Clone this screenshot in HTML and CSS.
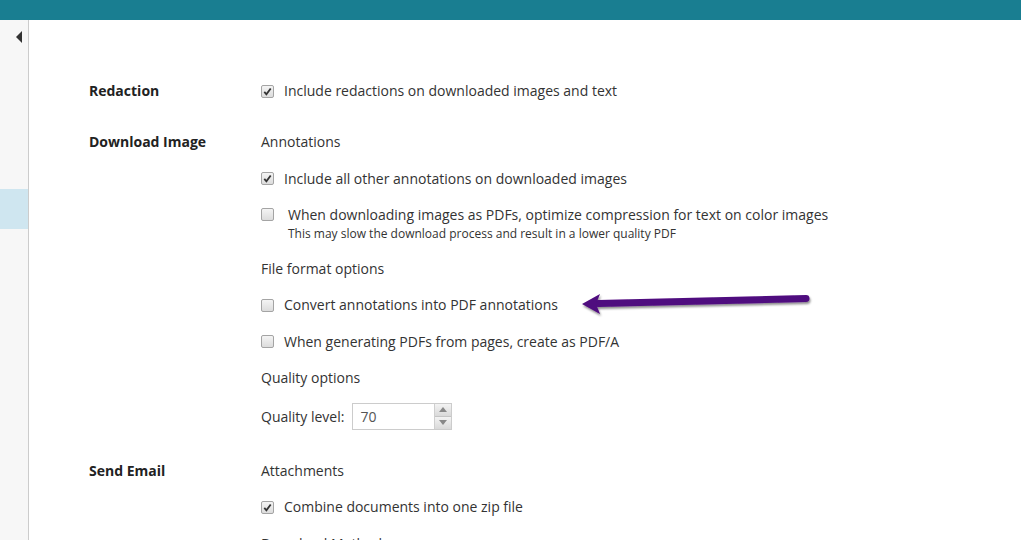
FILE: index.html
```html
<!DOCTYPE html>
<html lang="en">
<head>
  <meta charset="UTF-8">
  <title>Settings</title>
  <link rel="stylesheet" href="styles.css">
</head>
<body>
  <div class="topbar"></div>

  <div class="page">
    <div class="sidebar">
      <span class="collapse"></span>
      <div class="side-active"></div>
    </div>

    <div class="main">
      <div class="section">
        <div class="label">Redaction</div>
        <div class="options">
          <div class="opt"><span class="box checked"><svg viewBox="0 0 12 12" width="11" height="11"><path d="M2.5 6.5 L4.8 9 L9.5 2.8" fill="none" stroke="#333" stroke-width="2"/></svg></span>Include redactions on downloaded images and text</div>
        </div>
      </div>

      <div class="section">
        <div class="label">Download Image</div>
        <div class="options">
          <div class="head">Annotations</div>
          <div class="opt"><span class="box checked"><svg viewBox="0 0 12 12" width="11" height="11"><path d="M2.5 6.5 L4.8 9 L9.5 2.8" fill="none" stroke="#333" stroke-width="2"/></svg></span>Include all other annotations on downloaded images</div>
          <div class="opt opt-top">
            <span class="box"></span>
            <div class="opt-text">
              When downloading images as PDFs, optimize compression for text on color images
              <div class="hint">This may slow the download process and result in a lower quality PDF</div>
            </div>
          </div>
          <div class="head">File format options</div>
          <div class="opt"><span class="box"></span>Convert annotations into PDF annotations</div>
          <div class="opt"><span class="box"></span>When generating PDFs from pages, create as PDF/A</div>
          <div class="head">Quality options</div>
          <div class="quality">
            Quality level:
            <div class="number">
              <span class="number-value">70</span>
              <span class="spin">
                <span class="spin-btn"><svg viewBox="0 0 8 5" width="8" height="5"><path d="M0 5 L4 0 L8 5 Z" fill="#888"/></svg></span>
                <span class="spin-btn"><svg viewBox="0 0 8 5" width="8" height="5"><path d="M0 0 L4 5 L8 0 Z" fill="#888"/></svg></span>
              </span>
            </div>
          </div>
        </div>
      </div>

      <div class="section">
        <div class="label">Send Email</div>
        <div class="options">
          <div class="head">Attachments</div>
          <div class="opt"><span class="box checked"><svg viewBox="0 0 12 12" width="11" height="11"><path d="M2.5 6.5 L4.8 9 L9.5 2.8" fill="none" stroke="#333" stroke-width="2"/></svg></span>Combine documents into one zip file</div>
          <div class="head">Download Method</div>
        </div>
      </div>

      <!-- arrow drawn over the page -->
      <svg class="arrow" width="250" height="32" viewBox="0 0 250 32">
        <defs>
          <filter id="shadow" x="-10%" y="-50%" width="120%" height="200%">
            <feDropShadow dx="1" dy="2" stdDeviation="1.2" flood-color="#000" flood-opacity="0.45"/>
          </filter>
        </defs>
        <g filter="url(#shadow)">
          <path d="M20 13.5 L228 8.5" stroke="#4f0a7f" stroke-width="7" stroke-linecap="round" fill="none"/>
          <path d="M4 14 L22 4 L18 14 L22 24 Z" fill="#4f0a7f"/>
        </g>
      </svg>
    </div>
  </div>
</body>
</html>
```

FILE: styles.css
```css
body {
  margin: 0;
  font-family: "Open Sans", sans-serif;
  font-size: 14px;
  color: #333;
  background-color: #fff;
  overflow: hidden;
}

.topbar {
  height: 20px;
  background-color: #197e91;
}

.page {
  display: flex;
  height: 520px;
}

.sidebar {
  width: 28px;
  background-color: #f7f7f7;
  border-right: 1px solid #cccccc;
  flex-shrink: 0;
}

.collapse {
  display: block;
  width: 0;
  height: 0;
  margin: 11px 0 0 16px;
  border-top: 6px solid transparent;
  border-bottom: 6px solid transparent;
  border-right: 6px solid #333;
}

.side-active {
  margin-top: 146px;
  height: 40px;
  background-color: #cfe6f0;
}

.main {
  position: relative;
  flex: 1;
  padding: 61px 0 0 60px;
}

.section {
  display: flex;
  margin-bottom: 31px;
}

.label {
  width: 172px;
  font-weight: bold;
  color: #222;
  line-height: 20px;
  flex-shrink: 0;
}

.options {
  display: flex;
  flex-direction: column;
  gap: 16.5px;
}

.head {
  line-height: 20px;
}

.opt {
  display: flex;
  align-items: center;
  line-height: 20px;
}

.opt-top {
  align-items: flex-start;
}

.opt-top .box {
  margin-top: 3px;
  margin-right: 14px;
}

.hint {
  font-size: 12px;
  line-height: 17px;
}

.box {
  display: inline-flex;
  align-items: center;
  justify-content: center;
  width: 11px;
  height: 11px;
  margin-right: 10px;
  border: 1px solid #a4a4a4;
  border-radius: 2px;
  background: linear-gradient(#f4f4f4, #dcdcdc);
  flex-shrink: 0;
}

.quality {
  display: flex;
  align-items: center;
  gap: 8px;
  margin-top: -2px;
}

.number {
  display: flex;
  width: 100px;
  height: 27px;
  border: 1px solid #cccccc;
  box-sizing: border-box;
}

.number-value {
  flex: 1;
  padding-left: 7px;
  line-height: 25px;
  color: #555;
}

.spin {
  display: flex;
  flex-direction: column;
  width: 16px;
  border-left: 1px solid #cfcfcf;
}

.spin-btn {
  flex: 1;
  display: flex;
  align-items: center;
  justify-content: center;
  background: linear-gradient(#f3f3f3, #d9d9d9);
}

.spin-btn + .spin-btn {
  border-top: 1px solid #c4c4c4;
}

.arrow {
  position: absolute;
  left: 549px;
  top: 270px;
}
```
